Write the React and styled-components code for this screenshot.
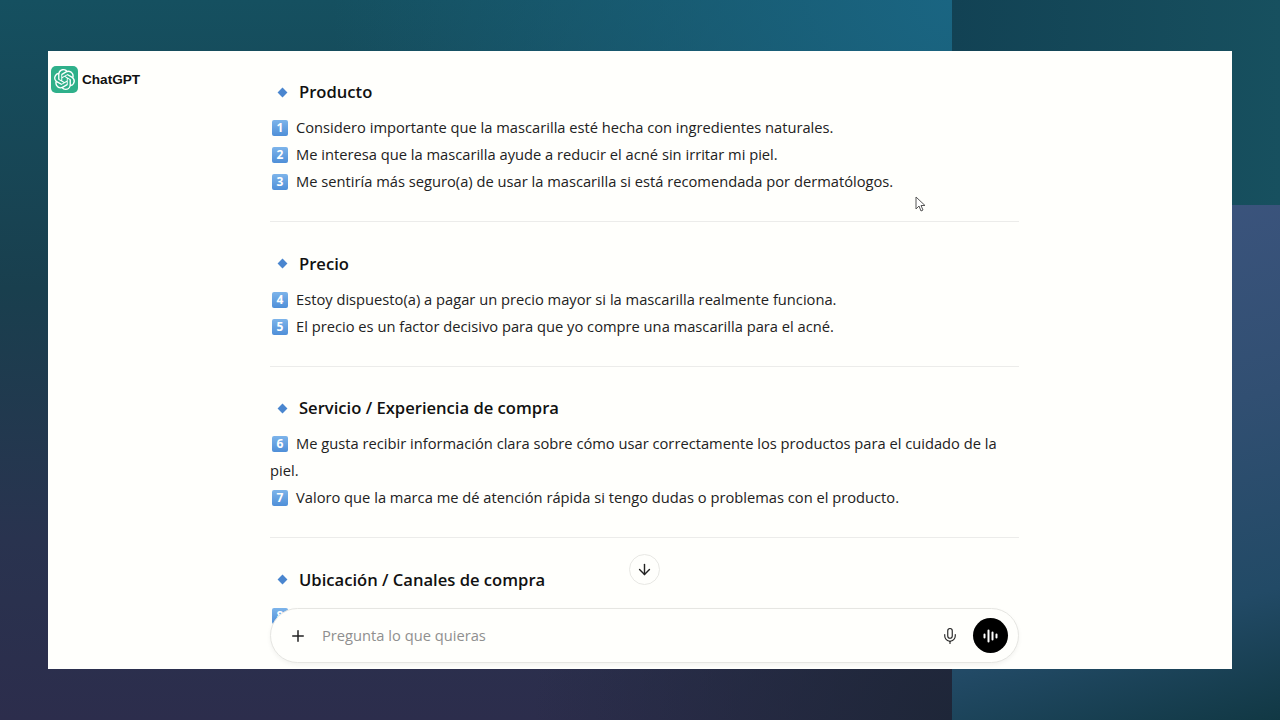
import React from 'react';
import styled, { createGlobalStyle } from 'styled-components';
import { SiOpenai } from 'react-icons/si';
import { ArrowDown, Mic, Plus } from 'lucide-react';

const GlobalStyle = createGlobalStyle`
  html, body { margin: 0; padding: 0; height: 100%; }
  body { font-family: "Open Sans", "Noto Sans", sans-serif; }
`

const Stage = styled.div`
  display: flex;
  justify-content: center;
  align-items: center;
  width: 1280px;
  height: 720px;
  overflow: hidden;
  background:
    linear-gradient(90deg, #124254, #17505f) right top / 328px 205px no-repeat,
    linear-gradient(165deg, #3e5580 0%, #314f72 45%, #224a66 78%, #113844 100%) right bottom / 328px 515px no-repeat,
    radial-gradient(circle 620px at 952px 0, #1a6582 0%, rgba(26, 101, 130, 0) 100%) left top / 952px 100% no-repeat,
    radial-gradient(circle 420px at 952px 720px, #1e2638 0%, rgba(30, 38, 56, 0) 100%) left top / 952px 100% no-repeat,
    linear-gradient(180deg, #155060 0%, #193f4e 40%, #29334f 75%, #2c2d4c 100%) left top / 952px 100% no-repeat;
`

const Slide = styled.div`
  position: relative;
  display: flex;
  width: 1184px;
  height: 618px;
  overflow: hidden;
  background: #fffffc;
`

const Brand = styled.div`
  display: flex;
  align-items: flex-start;
  gap: 4px;
  width: 222px;
  padding: 15px 0 0 3px;
  box-sizing: border-box;
`

const BrandLogo = styled.div`
  display: flex;
  align-items: center;
  justify-content: center;
  width: 27px;
  height: 27px;
  border-radius: 5px;
  background: #2fb08a;
  color: #fff;
  font-size: 21px;
`

const BrandName = styled.span`
  font-family: "Liberation Sans", Arial, sans-serif;
  font-size: 13.6px;
  font-weight: 700;
  line-height: 27px;
  color: #111;
`

const Chat = styled.main`
  width: 749px;
  padding-top: 25px;
`

const Section = styled.section`
  padding-bottom: 26px;
  margin-bottom: 25.5px;
  border-bottom: 1.5px solid #ececea;
  &:last-child { border-bottom: 0; }
`

const Heading = styled.h3`
  display: flex;
  align-items: center;
  margin: 0 0 6px;
  font-size: 16.6px;
  font-weight: 600;
  line-height: 32px;
  color: #111;
`

const Diamond = styled.i`
  width: 7px;
  height: 7px;
  margin: 0 13px 0 9px;
  background: #4a86cf;
  transform: rotate(45deg);
`

const Line = styled.p`
  margin: 0;
  font-size: 14.7px;
  line-height: 27px;
  color: #222;
`

const Key = styled.span`
  display: inline-block;
  width: 16px;
  height: 16px;
  margin: 0 8px 0 2px;
  border-radius: 2px;
  background: linear-gradient(180deg, #7db4ea, #4f8fd8);
  color: #fff;
  font-size: 12px;
  font-weight: 700;
  line-height: 16px;
  text-align: center;
  vertical-align: 1px;
`

const ScrollDown = styled.button`
  position: absolute;
  left: 581px;
  top: 503px;
  display: flex;
  align-items: center;
  justify-content: center;
  width: 31px;
  height: 31px;
  padding: 0;
  border: 1px solid #e8e8e4;
  border-radius: 50%;
  background: #fffffc;
  color: #222;
`

const Composer = styled.div`
  position: absolute;
  left: 222px;
  top: 557px;
  display: flex;
  align-items: center;
  width: 749px;
  height: 55px;
  padding: 0 10px 0 18px;
  box-sizing: border-box;
  border: 1px solid #e6e6e2;
  border-radius: 28px;
  background: #fffffc;
  box-shadow: 0 2px 4px rgba(0, 0, 0, 0.05);
  color: #222;
`

const Placeholder = styled.span`
  flex: 1;
  margin-left: 15px;
  padding-bottom: 2px;
  font-size: 14.7px;
  color: #8f8f8f;
`

const VoiceButton = styled.div`
  display: flex;
  align-items: center;
  justify-content: center;
  width: 35px;
  height: 35px;
  margin-left: 14px;
  border-radius: 50%;
  background: #000;
`

const Pointer = styled.svg`
  position: absolute;
  left: 867px;
  top: 145px;
`

const sections = [
  {
    title: 'Producto',
    lines: [
      ['1', 'Considero importante que la mascarilla esté hecha con ingredientes naturales.'],
      ['2', 'Me interesa que la mascarilla ayude a reducir el acné sin irritar mi piel.'],
      ['3', 'Me sentiría más seguro(a) de usar la mascarilla si está recomendada por dermatólogos.'],
    ],
  },
  {
    title: 'Precio',
    lines: [
      ['4', 'Estoy dispuesto(a) a pagar un precio mayor si la mascarilla realmente funciona.'],
      ['5', 'El precio es un factor decisivo para que yo compre una mascarilla para el acné.'],
    ],
  },
  {
    title: 'Servicio / Experiencia de compra',
    lines: [
      ['6', 'Me gusta recibir información clara sobre cómo usar correctamente los productos para el cuidado de la piel.'],
      ['7', 'Valoro que la marca me dé atención rápida si tengo dudas o problemas con el producto.'],
    ],
  },
  {
    title: 'Ubicación / Canales de compra',
    lines: [['8', '']],
  },
];

const App = () => (
  <Stage>
    <GlobalStyle />
    <Slide>
      <Brand>
        <BrandLogo><SiOpenai /></BrandLogo>
        <BrandName>ChatGPT</BrandName>
      </Brand>
      <Chat>
        {sections.map((section) => (
          <Section key={section.title}>
            <Heading><Diamond />{section.title}</Heading>
            {section.lines.map(([num, text]) => (
              <Line key={num}><Key>{num}</Key>{text}</Line>
            ))}
          </Section>
        ))}
      </Chat>
      <Pointer width="12" height="17" viewBox="0 0 12 17">
        <path d="M1 1v12l3-3 2 5 2-1-2-4.500h4z" fill="#fff" stroke="#555" strokeWidth="1" />
      </Pointer>
      <ScrollDown><ArrowDown size={17} /></ScrollDown>
      <Composer>
        <Plus size={18} />
        <Placeholder>Pregunta lo que quieras</Placeholder>
        <Mic size={18} strokeWidth={1.5} />
        <VoiceButton>
          <svg width="15" height="14" viewBox="0 0 15 14" fill="none" stroke="#fff" strokeWidth="2" strokeLinecap="round">
            <path d="M1.500 5.500v3M5.500 1.500v11M9.500 3.500v7M13.500 5.500v3" />
          </svg>
        </VoiceButton>
      </Composer>
    </Slide>
  </Stage>
);

export default App;
